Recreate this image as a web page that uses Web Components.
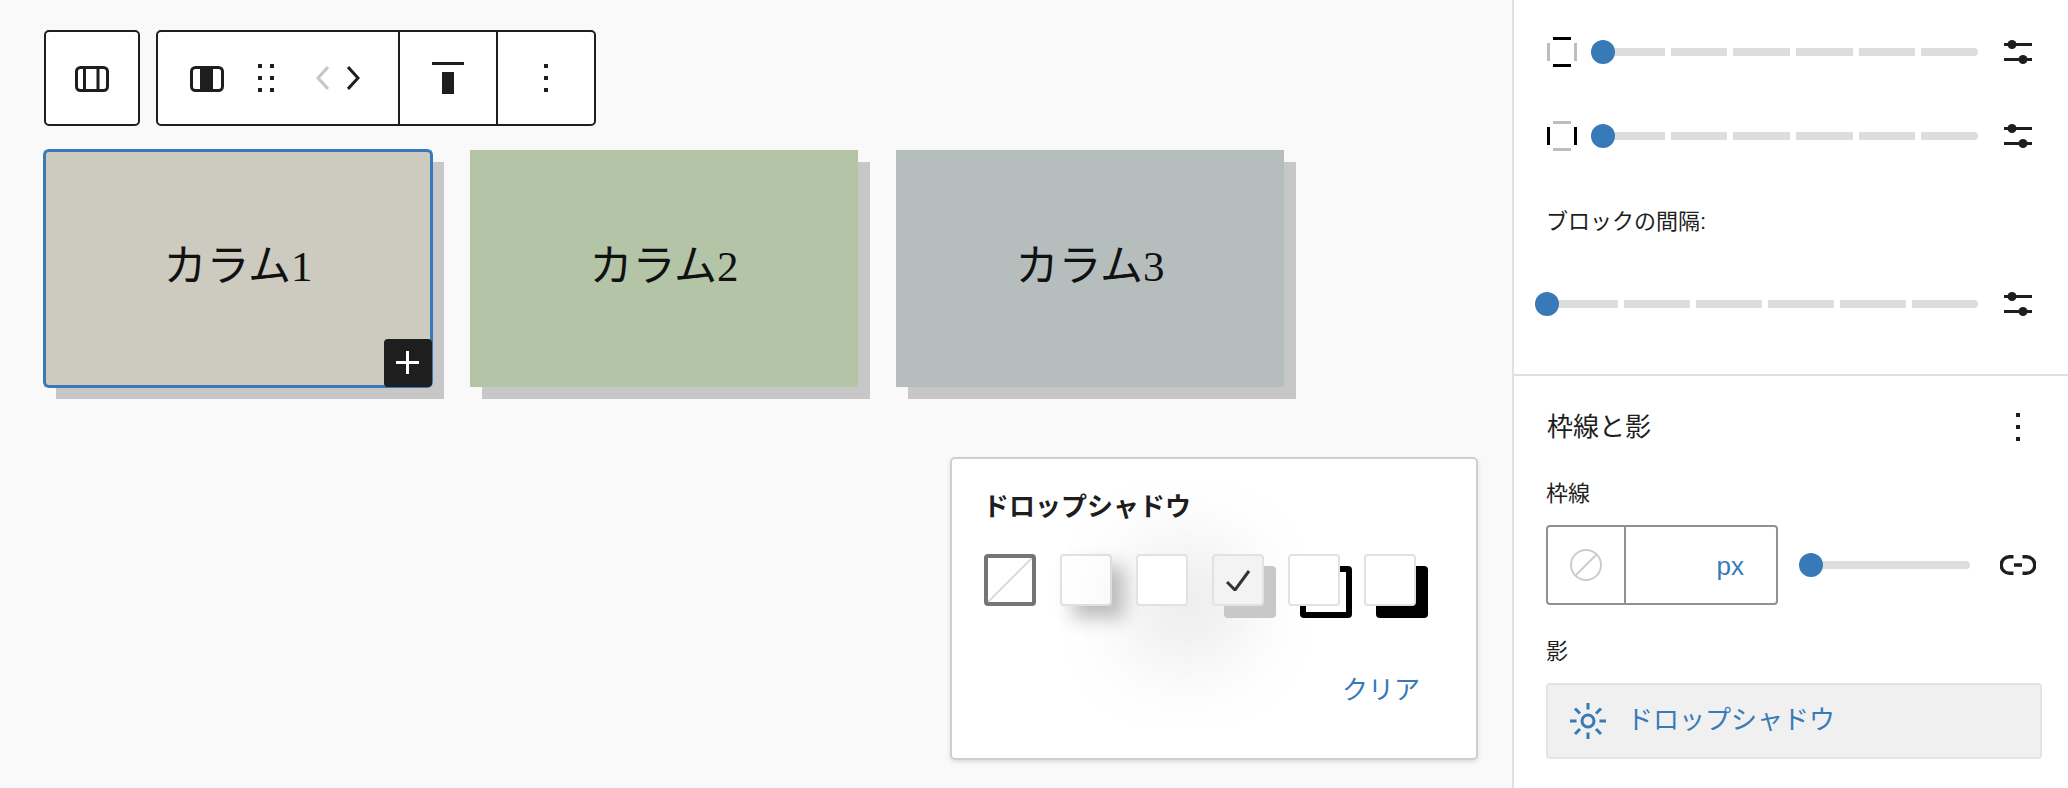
<!doctype html>
<html lang="ja">
<head>
<meta charset="utf-8">
<title>カラム</title>
<style>
  html, body { margin: 0; height: 100%; }
  body {
    width: 2068px;
    height: 788px;
    overflow: hidden;
    display: flex;
    background: #f9f9f9;
    color: #1e1e1e;
    font-family: "Liberation Sans", "Noto Sans CJK JP", sans-serif;
  }
</style>
</head>
<body>
  <editor-canvas>
    <tool-group slot="tools">
      <tool-part><tool-button width="92"><tool-icon name="columns"></tool-icon></tool-button></tool-part>
    </tool-group>
    <tool-group slot="tools">
      <tool-part>
        <tool-button width="97"><tool-icon name="column"></tool-icon></tool-button>
        <tool-button width="22"><tool-icon name="drag"></tool-icon></tool-button>
        <tool-button width="30"></tool-button>
        <tool-button width="31"><tool-icon name="left"></tool-icon></tool-button>
        <tool-button width="31"><tool-icon name="right"></tool-icon></tool-button>
        <tool-button width="29"></tool-button>
      </tool-part>
      <tool-part divided><tool-button width="96"><tool-icon name="aligntop"></tool-icon></tool-button></tool-part>
      <tool-part divided><tool-button width="96"><tool-icon name="kebab"></tool-icon></tool-button></tool-part>
    </tool-group>
    <column-card slot="cards" color="#cdcabf" selected>カラム1</column-card>
    <column-card slot="cards" color="#b4c4a7">カラム2</column-card>
    <column-card slot="cards" color="#b6bdbd">カラム3</column-card>
    <shadow-popover slot="over" heading="ドロップシャドウ" action="クリア">
      <shadow-swatch kind="none"></shadow-swatch>
      <shadow-swatch kind="natural"></shadow-swatch>
      <shadow-swatch kind="deep"></shadow-swatch>
      <shadow-swatch kind="sharp" selected></shadow-swatch>
      <shadow-swatch kind="outlined"></shadow-swatch>
      <shadow-swatch kind="crisp"></shadow-swatch>
    </shadow-popover>
  </editor-canvas>

  <settings-sidebar>
    <panel-section style="height:374px;padding-top:28px">
      <slider-row>
        <tool-icon slot="lead" name="spacev"></tool-icon>
        <step-slider steps="6"></step-slider>
      </slider-row>
      <slider-row style="margin-top:36px">
        <tool-icon slot="lead" name="spaceh"></tool-icon>
        <step-slider steps="6"></step-slider>
      </slider-row>
      <field-label style="margin-top:47px">ブロックの間隔:</field-label>
      <slider-row style="margin-top:43px;margin-left:-11px">
        <step-slider steps="6"></step-slider>
      </slider-row>
    </panel-section>
    <panel-section rule style="padding-top:27px">
      <panel-head>枠線と影</panel-head>
      <field-label style="margin-top:28px">枠線</field-label>
      <border-row></border-row>
      <field-label style="margin-top:32px">影</field-label>
      <shadow-button>ドロップシャドウ</shadow-button>
    </panel-section>
  </settings-sidebar>

<script>
const INK = "#1e1e1e";
const BLUE = "#377ab7";

const ICONS = {
  columns: `<svg width="34" height="28" viewBox="0 0 34 28"><rect x="1.5" y="3.5" width="31" height="23" rx="4" fill="none" stroke="${INK}" stroke-width="3"/><path d="M9.500 3v23M23 3v23" stroke="${INK}" stroke-width="3"/></svg>`,
  column: `<svg width="34" height="28" viewBox="0 0 34 28"><rect x="1.5" y="3.5" width="31" height="23" rx="4" fill="none" stroke="${INK}" stroke-width="3"/><rect x="10" y="3" width="13" height="24" fill="${INK}"/></svg>`,
  drag: `<svg width="16" height="28" viewBox="0 0 16 28" fill="${INK}"><path d="M0 0h4v4H0zM12 0h4v4h-4zM0 12h4v4H0zM12 12h4v4h-4zM0 24h4v4H0zM12 24h4v4h-4z"/></svg>`,
  left: `<svg width="13" height="24" viewBox="0 0 13 24" fill="none" stroke="#c6c6c6" stroke-width="3"><path d="M12 1 2 12l10 11"/></svg>`,
  right: `<svg width="13" height="24" viewBox="0 0 13 24" fill="none" stroke="${INK}" stroke-width="3"><path d="M1 1l10 11L1 23"/></svg>`,
  aligntop: `<svg width="32" height="32" viewBox="0 0 32 32" fill="${INK}"><path d="M0 0h32v3H0zM10 10h12v22H10z"/></svg>`,
  kebab: `<svg width="4" height="28" viewBox="0 0 4 28" fill="${INK}"><path d="M0 0h4v4H0zM0 12h4v4H0zM0 24h4v4H0z"/></svg>`,
  plus: `<svg width="24" height="24" viewBox="0 0 24 24" fill="#fff"><path d="M10 0h3v23h-3zM0 10h23v3H0z"/></svg>`,
  spacev: `<svg width="30" height="30" viewBox="0 0 30 30"><path d="M0 6h3v18H0zM27 6h3v18h-3z" fill="#bdbdbd"/><path d="M6 0h18v3H6zM6 27h18v3H6z" fill="#000"/></svg>`,
  spaceh: `<svg width="30" height="30" viewBox="0 0 30 30"><path d="M6 0h18v3H6zM6 27h18v3H6z" fill="#bdbdbd"/><path d="M0 6h3v18H0zM27 6h3v18h-3z" fill="#000"/></svg>`,
  sliders: `<svg width="28" height="24" viewBox="0 0 28 24" fill="${INK}"><path d="M0 3h28v3H0zM0 18h28v3H0z"/><circle cx="8" cy="4.5" r="4.5"/><circle cx="19" cy="19.5" r="4.5"/></svg>`,
  link: `<svg width="36" height="20" viewBox="0 0 36 20" fill="none" stroke="${INK}" stroke-width="3.4"><path d="M13.500 1.700h-4a8.300 8.300 0 0 0 0 16.600h4M22.500 1.700h4a8.300 8.300 0 0 1 0 16.600h-4M14 10h8"/></svg>`,
  nocolor: `<svg width="32" height="32" viewBox="0 0 32 32" fill="none" stroke="#cccccc" stroke-width="2"><circle cx="16" cy="16" r="15"/><path d="M5 27 27 5"/></svg>`,
  sun: `<svg width="36" height="36" viewBox="0 0 36 36" fill="none" stroke="${BLUE}" stroke-width="3"><circle cx="18" cy="18" r="6"/><path d="M18 0v6.500M18 29.500V36M0 18h6.500M29.500 18H36M5 5.500l5 5M26 26l5 5M31 5.500l-5 5M10 26l-5 5"/></svg>`,
  check: `<svg width="24" height="22" viewBox="0 0 24 22" fill="none" stroke="#333" stroke-width="3"><path d="M1 13l8 8L23 2"/></svg>`
};

class ToolIcon extends HTMLElement {
  connectedCallback() {
    this.attachShadow({ mode: "open" });
    this.shadowRoot.innerHTML = `<style>:host{display:flex;flex:none}svg{display:block}</style>${ICONS[this.getAttribute("name")]}`;
  }
}

class ToolGroup extends HTMLElement {
  constructor() {
    super();
    this.attachShadow({ mode: "open" });
    this.shadowRoot.innerHTML = `
      <style>
        :host {
          display: flex;
          height: 96px;
          box-sizing: border-box;
          background: #fff;
          border: 2px solid ${INK};
          border-radius: 5px;
        }
      </style>
      <slot></slot>`;
  }
}

class ToolPart extends HTMLElement {
  constructor() {
    super();
    this.attachShadow({ mode: "open" });
    this.shadowRoot.innerHTML = `
      <style>
        :host { display: flex; height: 100%; }
        :host([divided]) { border-left: 2px solid ${INK}; }
      </style>
      <slot></slot>`;
  }
}

class ToolButton extends HTMLElement {
  connectedCallback() {
    this.attachShadow({ mode: "open" });
    this.shadowRoot.innerHTML = `
      <style>
        :host {
          display: flex;
          align-items: center;
          justify-content: center;
          width: ${this.getAttribute("width")}px;
        }
      </style>
      <slot></slot>`;
  }
}

class ColumnCard extends HTMLElement {
  connectedCallback() {
    this.attachShadow({ mode: "open" });
    const selected = this.hasAttribute("selected");
    this.shadowRoot.innerHTML = `
      <style>
        :host {
          position: relative;
          display: flex;
          align-items: center;
          justify-content: center;
          width: 388px;
          height: 237px;
          padding-bottom: 14px;
          box-sizing: border-box;
          background: ${this.getAttribute("color")};
          box-shadow: 12px 12px 0 #c7c7c7;
          font: 43px "Liberation Serif", "Noto Sans CJK JP", serif;
          color: #111;
        }
        .frame {
          position: absolute;
          inset: -1px;
          border: 3px solid ${BLUE};
          border-radius: 6px;
        }
        .add {
          position: absolute;
          right: 0;
          bottom: 0;
          width: 48px;
          height: 48px;
          display: flex;
          align-items: center;
          justify-content: center;
          background: ${INK};
          border-radius: 4px;
        }
      </style>
      <slot></slot>
      ${selected ? `<div class="frame"></div><div class="add"><tool-icon name="plus"></tool-icon></div>` : ""}`;
  }
}

class EditorCanvas extends HTMLElement {
  constructor() {
    super();
    this.attachShadow({ mode: "open" });
    this.shadowRoot.innerHTML = `
      <style>
        :host {
          position: relative;
          display: block;
          flex: 1;
          box-sizing: border-box;
          padding: 30px 0 0 44px;
        }
        .tools { display: flex; gap: 16px; }
        .cards { display: flex; gap: 38px; margin-top: 24px; }
      </style>
      <div class="tools"><slot name="tools"></slot></div>
      <div class="cards"><slot name="cards"></slot></div>
      <slot name="over"></slot>`;
  }
}

const SHADOWS = {
  none: "none",
  natural: "12px 12px 18px rgba(0,0,0,.25)",
  deep: "24px 24px 100px rgba(0,0,0,.4)",
  sharp: "12px 12px 0 #c8c8c8",
  outlined: "12px 12px 0 -6px #fff, 12px 12px 0 0 #000",
  crisp: "12px 12px 0 #000"
};

class ShadowSwatch extends HTMLElement {
  connectedCallback() {
    this.attachShadow({ mode: "open" });
    const kind = this.getAttribute("kind");
    const selected = this.hasAttribute("selected");
    this.shadowRoot.innerHTML = `
      <style>
        :host {
          display: flex;
          align-items: center;
          justify-content: center;
          width: 52px;
          height: 52px;
          box-sizing: border-box;
          border: 2px solid #e2e2e2;
          border-radius: 4px;
          background: ${selected ? "#f3f3f3" : "#fff"};
          box-shadow: ${SHADOWS[kind]};
        }
        :host([kind="none"]) {
          border: 4px solid #757575;
          background: linear-gradient(to bottom right, transparent calc(50% - 1px), #dddddd calc(50% - 1px), #dddddd calc(50% + 1px), transparent calc(50% + 1px));
        }
      </style>
      ${selected ? `<tool-icon name="check"></tool-icon>` : ""}`;
  }
}

class ShadowPopover extends HTMLElement {
  connectedCallback() {
    this.attachShadow({ mode: "open" });
    this.shadowRoot.innerHTML = `
      <style>
        :host {
          position: absolute;
          top: 457px;
          right: 34px;
          display: block;
          width: 528px;
          height: 303px;
          box-sizing: border-box;
          padding: 30px 56px 0 32px;
          background: #fff;
          border: 2px solid #cfcfcf;
          border-radius: 5px;
          box-shadow: 0 2px 4px rgba(0,0,0,.12);
        }
        h2 {
          margin: 0 0 0 -1px;
          font-size: 26px;
          font-weight: 700;
          line-height: 36px;
          color: ${INK};
        }
        .swatches { display: flex; gap: 24px; margin-top: 29px; }
        .action {
          margin-top: 66px;
          text-align: right;
          font-size: 26px;
          line-height: 36px;
          color: ${BLUE};
        }
      </style>
      <h2>${this.getAttribute("heading")}</h2>
      <div class="swatches"><slot></slot></div>
      <div class="action">${this.getAttribute("action")}</div>`;
  }
}

class SettingsSidebar extends HTMLElement {
  constructor() {
    super();
    this.attachShadow({ mode: "open" });
    this.shadowRoot.innerHTML = `
      <style>
        :host {
          display: block;
          width: 556px;
          flex: none;
          box-sizing: border-box;
          background: #fff;
          border-left: 2px solid #e0e0e0;
        }
      </style>
      <slot></slot>`;
  }
}

class PanelSection extends HTMLElement {
  constructor() {
    super();
    this.attachShadow({ mode: "open" });
    this.shadowRoot.innerHTML = `
      <style>
        :host {
          display: block;
          box-sizing: border-box;
          padding: 0 26px 0 32px;
        }
        :host([rule]) { border-top: 2px solid #e0e0e0; }
      </style>
      <slot></slot>`;
  }
}

class StepSlider extends HTMLElement {
  connectedCallback() {
    this.attachShadow({ mode: "open" });
    const steps = Number(this.getAttribute("steps") || 1);
    const segs = Array.from({ length: steps }, () => `<i></i>`).join("");
    this.shadowRoot.innerHTML = `
      <style>
        :host {
          position: relative;
          display: flex;
          align-items: center;
          flex: 1;
          height: 24px;
          padding-left: 12px;
        }
        .track { display: flex; gap: 6px; flex: 1; height: 8px; }
        i { flex: 1 1 0; background: #dddddd; }
        i:first-child { flex-basis: 5px; }
        i:last-child { border-radius: 0 4px 4px 0; }
        .thumb {
          position: absolute;
          left: 0;
          top: 0;
          width: 24px;
          height: 24px;
          border-radius: 50%;
          background: ${BLUE};
        }
      </style>
      <div class="track">${segs}</div>
      <div class="thumb"></div>`;
  }
}

class SliderRow extends HTMLElement {
  constructor() {
    super();
    this.attachShadow({ mode: "open" });
    this.shadowRoot.innerHTML = `
      <style>
        :host {
          display: flex;
          align-items: center;
          height: 48px;
          margin-left: 1px;
          margin-right: 10px;
        }
        ::slotted([slot="lead"]) { margin-right: 14px; }
        .end { margin-left: 26px; }
      </style>
      <slot name="lead"></slot>
      <slot></slot>
      <tool-icon class="end" name="sliders"></tool-icon>`;
  }
}

class FieldLabel extends HTMLElement {
  constructor() {
    super();
    this.attachShadow({ mode: "open" });
    this.shadowRoot.innerHTML = `
      <style>
        :host { display: block; font-size: 22px; line-height: 30px; color: ${INK}; }
      </style>
      <slot></slot>`;
  }
}

class PanelHead extends HTMLElement {
  constructor() {
    super();
    this.attachShadow({ mode: "open" });
    this.shadowRoot.innerHTML = `
      <style>
        :host {
          display: flex;
          align-items: center;
          justify-content: space-between;
          height: 48px;
          margin-left: 1px;
          padding-right: 22px;
          font-size: 26px;
          color: ${INK};
        }
        .title { padding-bottom: 6px; }
      </style>
      <div class="title"><slot></slot></div>
      <tool-icon name="kebab"></tool-icon>`;
  }
}

class BorderRow extends HTMLElement {
  constructor() {
    super();
    this.attachShadow({ mode: "open" });
    this.shadowRoot.innerHTML = `
      <style>
        :host {
          display: flex;
          align-items: center;
          margin-top: 16px;
        }
        .input {
          display: flex;
          flex: none;
          width: 232px;
          height: 80px;
          box-sizing: border-box;
          background: #fff;
          border: 2px solid #919191;
          border-radius: 4px;
        }
        .swatch {
          display: flex;
          align-items: center;
          justify-content: center;
          width: 76px;
          border-right: 2px solid #919191;
        }
        .unit {
          flex: 1;
          display: flex;
          align-items: center;
          justify-content: flex-end;
          padding: 2px 32px 0 0;
          font: 26px "Liberation Sans", sans-serif;
          color: ${BLUE};
        }
        step-slider { flex: none; width: 159px; margin-left: 21px; }
        .link { margin-left: 30px; }
      </style>
      <div class="input">
        <div class="swatch"><tool-icon name="nocolor"></tool-icon></div>
        <div class="unit">px</div>
      </div>
      <step-slider steps="1"></step-slider>
      <tool-icon class="link" name="link"></tool-icon>`;
  }
}

class ShadowButton extends HTMLElement {
  constructor() {
    super();
    this.attachShadow({ mode: "open" });
    this.shadowRoot.innerHTML = `
      <style>
        :host {
          display: flex;
          align-items: center;
          gap: 21px;
          height: 76px;
          margin-top: 16px;
          box-sizing: border-box;
          padding-left: 22px;
          background: #f0f0f0;
          border: 2px solid #e4e4e4;
          border-radius: 4px;
          font-size: 26px;
          color: ${BLUE};
        }
        .label { padding-bottom: 8px; }
      </style>
      <tool-icon name="sun"></tool-icon>
      <div class="label"><slot></slot></div>`;
  }
}

customElements.define("tool-icon", ToolIcon);
customElements.define("tool-group", ToolGroup);
customElements.define("tool-part", ToolPart);
customElements.define("tool-button", ToolButton);
customElements.define("column-card", ColumnCard);
customElements.define("editor-canvas", EditorCanvas);
customElements.define("shadow-swatch", ShadowSwatch);
customElements.define("shadow-popover", ShadowPopover);
customElements.define("settings-sidebar", SettingsSidebar);
customElements.define("panel-section", PanelSection);
customElements.define("step-slider", StepSlider);
customElements.define("slider-row", SliderRow);
customElements.define("field-label", FieldLabel);
customElements.define("panel-head", PanelHead);
customElements.define("border-row", BorderRow);
customElements.define("shadow-button", ShadowButton);
</script>
</body>
</html>
